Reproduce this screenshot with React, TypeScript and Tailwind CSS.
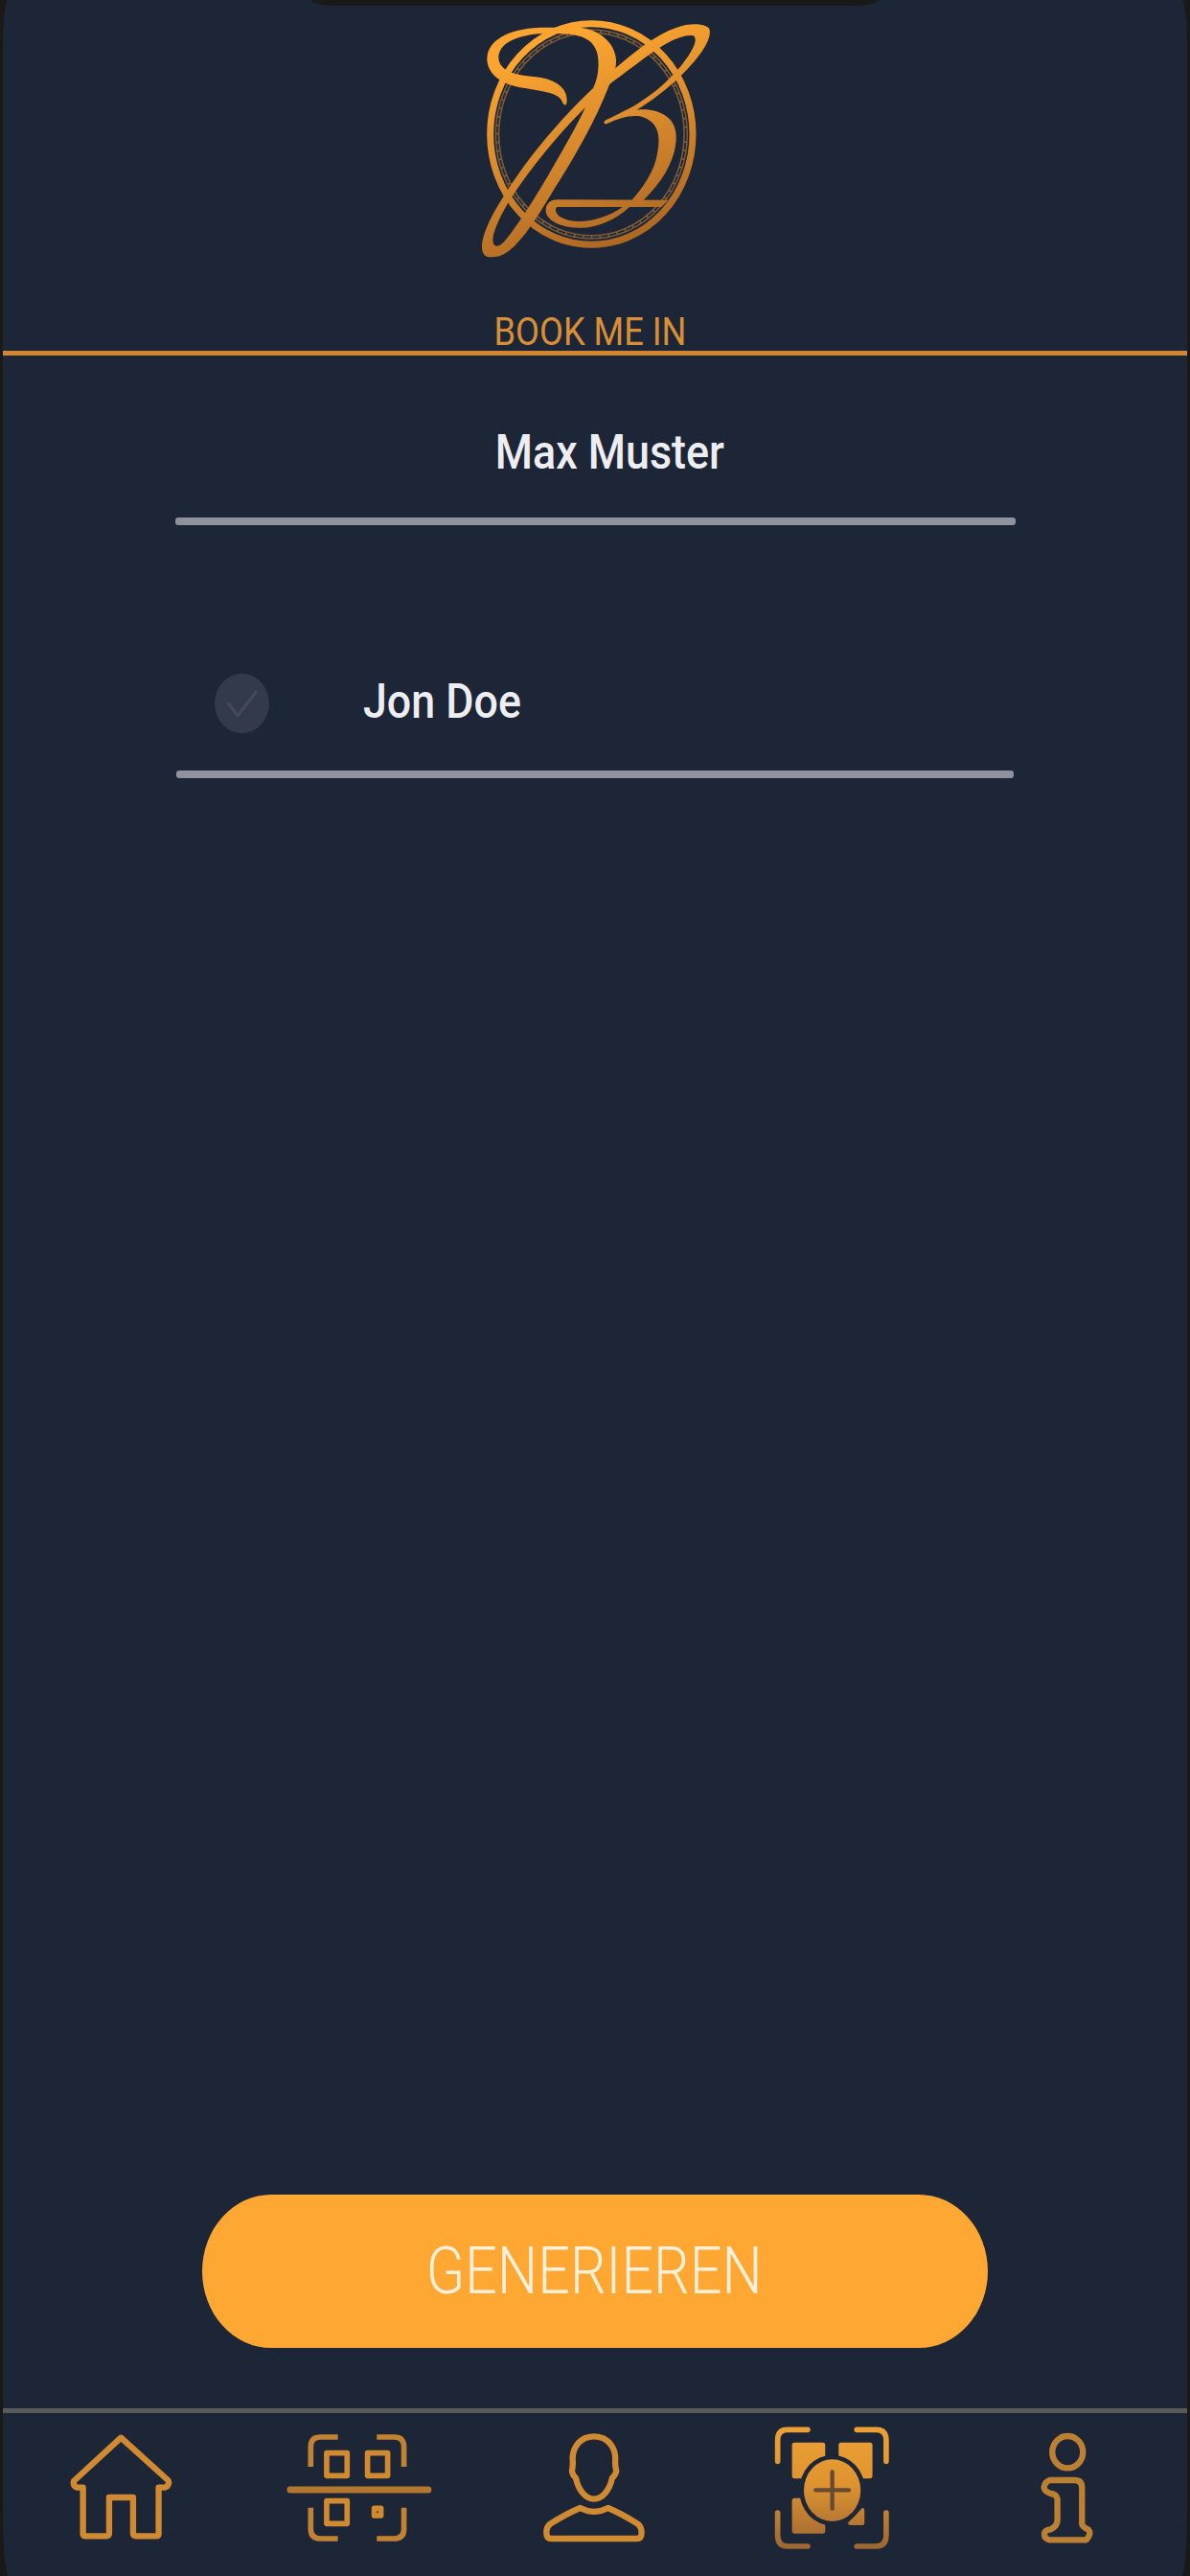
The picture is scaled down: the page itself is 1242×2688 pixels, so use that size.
import type { ReactNode } from 'react';
import clsx from 'clsx';

function Logo() {
  return (
    <svg viewBox="0 0 840 870" className="h-[290px] w-[280px]" fill="none">
      <defs>
        <linearGradient id="gold" gradientUnits="userSpaceOnUse" x1="300" y1="150" x2="520" y2="780">
          <stop offset="0" stopColor="#fba42f" />
          <stop offset="0.45" stopColor="#d98a2c" />
          <stop offset="1" stopColor="#aa6522" />
        </linearGradient>
      </defs>
      <ellipse cx="409" cy="420" rx="317" ry="346" stroke="url(#gold)" strokeWidth="21" />
      <ellipse cx="409" cy="420" rx="295" ry="322" stroke="#7d5c36" strokeWidth="14" />
      <ellipse cx="409" cy="420" rx="295" ry="322" stroke="#1d2637" strokeWidth="5" strokeDasharray="22 5" />
      <g fill="url(#gold)">
        {/* upper left flourish and stem */}
        <path d="M330 328C318 332 320 314 306 304C290 290 250 285 200 276C125 264 82 232 82 182C84 125 150 91 245 86L372 86C432 92 482 132 486 186C487 214 478 238 464 268C424 372 356 494 296 586C252 658 214 724 170 768C136 802 112 807 84 804C64 798 64 772 68 752C78 706 110 650 146 596C210 494 310 374 414 276C430 244 434 206 428 170C418 128 384 108 320 106C230 98 122 116 118 178C118 224 172 236 230 240C296 246 342 278 330 328ZM390 336C300 426 222 522 160 616C126 670 104 716 100 748C100 776 116 776 136 756C182 704 252 588 304 496C342 430 366 386 390 336Z" fillRule="evenodd" />
        {/* upper right loop */}
        <path d="M478 218C550 158 606 110 676 86C718 70 768 74 778 90C788 120 752 176 690 236C644 280 596 316 550 344C586 340 620 346 646 366C676 388 680 430 668 476C650 540 610 590 562 636L530 632C576 582 606 532 614 486C628 424 618 378 560 364C526 360 496 370 456 388C446 390 446 380 454 376C488 358 530 340 560 320C614 286 650 252 688 208C722 166 746 124 728 112C700 106 652 128 606 160C560 192 520 224 462 266Z" />
        {/* lower bowl */}
        <path d="M650 626L628 648L528 648C480 692 420 716 366 713C314 712 262 690 266 654C270 634 282 625 304 625ZM506 648L300 648C290 662 304 682 340 690C390 700 454 684 506 648Z" fillRule="evenodd" />
      </g>
    </svg>
  );
}

function NavItem({ viewBox, label, children }: { viewBox: string; label: string; children: ReactNode }) {
  return (
    <button aria-label={label} className="h-[170px] flex-1">
      <svg
        viewBox={viewBox}
        className="h-full w-full"
        fill="none"
        stroke="#d08a31"
        strokeWidth="19"
        strokeLinecap="round"
        strokeLinejoin="round"
      >
        {children}
      </svg>
    </button>
  );
}

function Navigation() {
  return (
    <nav className="flex h-[175px] border-t-[5px] border-[#5a5a58]">
      <NavItem viewBox="9 84 742 510" label="Home">
        <path d="M379 161L526 294Q532 302 524 313L516 317H497V462Q497 469 490 469H426Q417 469 417 460V348H342V460Q342 469 333 469H268Q260 469 260 462V317H242Q228 312 231 297Z" />
      </NavItem>
      <NavItem viewBox="750 84 742 510" label="Scan">
        <g strokeWidth="17" strokeLinecap="butt" stroke="#c18233">
          <path d="M973 252V190Q973 159 1004 159H1058M1180 159H1234Q1265 159 1265 190V252M973 380V446Q973 477 1004 477H1058M1180 477H1234Q1265 477 1265 446V380" />
        </g>
        <g strokeWidth="17" stroke="#d28a30">
          <path d="M1023 209H1087V280H1023ZM1151 209H1214V280H1151ZM1023 359H1087V430H1023Z" />
          <path d="M1172 382H1193V405H1172Z" />
        </g>
        <path d="M909 324H1341" strokeWidth="21" stroke="#b3762e" />
      </NavItem>
      <NavItem viewBox="-128 84 742 510" label="Profil">
        <path d="M241 157C199 157 174 190 174 228Q176 246 172 265Q174 279 184 287C192 326 215 353 241 353C267 353 290 326 298 287Q308 279 311 265Q306 246 308 228C308 190 283 157 241 157Z" />
        <path d="M198 381Q241 404 285 381C318 395 350 413 378 431Q390 440 390 458Q390 477 375 477H108Q92 477 92 458Q92 440 104 431C134 412 166 394 198 381Z" />
      </NavItem>
      <NavItem viewBox="613 84 742 510" label="Code erstellen">
        <defs>
          <linearGradient id="create" gradientUnits="userSpaceOnUse" x1="0" y1="130" x2="0" y2="510">
            <stop offset="0" stopColor="#eda035" />
            <stop offset="0.45" stopColor="#df942f" />
            <stop offset="1" stopColor="#9b6635" />
          </linearGradient>
        </defs>
        <g stroke="url(#create)" strokeWidth="17">
          <path d="M813 235V169Q813 136 843 136H907M1061 136H1122Q1153 136 1153 169V235M813 396V466Q813 501 843 501H907M1061 501H1122Q1153 501 1153 466V396" />
        </g>
        <g fill="url(#create)" stroke="none">
          <path d="M866 176H955Q962 176 962 184V250L890 289H866Q858 289 858 280V184Q858 176 866 176Z" />
          <path d="M1012 176H1102Q1110 176 1110 184V280Q1110 289 1102 289H1076L1004 250V184Q1004 176 1012 176Z" />
          <path d="M866 350H884L962 430V454Q962 461 954 461H866Q858 461 858 453V358Q858 350 866 350Z" />
          <path d="M1078 381Q1085 381 1085 389V428Q1085 435 1078 435H1042Q1033 435 1034 427Z" />
          <ellipse cx="984" cy="326" rx="103" ry="111" fill="#1d2637" />
          <ellipse cx="984" cy="326" rx="89" ry="97" />
        </g>
        <path d="M984 268V383M932 325H1036" stroke="#674a32" strokeWidth="13" />
      </NavItem>
      <NavItem viewBox="94 84 742 510" label="Info">
        <g strokeWidth="19" stroke="#bc8033">
          <ellipse cx="461" cy="206" rx="48" ry="50" />
          <path d="M405 294H482Q506 294 506 318V432Q508 440 526 449Q537 461 520 481H405Q388 478 388 462Q389 450 408 448Q428 439 429 420V352Q426 338 408 336Q387 329 387 316Q390 299 405 294Z" />
        </g>
      </NavItem>
    </nav>
  );
}

function Row({ className, children }: { className: string; children: ReactNode }) {
  return (
    <div className={clsx('mx-auto flex flex-col', className)}>
      <div className="flex flex-1 items-center">{children}</div>
      <div className="h-[8px] rounded-[3px] bg-[#8f919d]" />
    </div>
  );
}

export default function App() {
  return (
    <div className="h-[2688px] w-[1242px] overflow-hidden bg-[#191918] px-[3px] font-[Roboto,sans-serif]">
      <main className="relative flex h-full flex-col rounded-t-[5px_50px] rounded-b-[6px_70px] bg-[#1d2637]">
        <div className="absolute top-0 left-[322px] h-[6px] w-[592px] rounded-b-[26px_6px] bg-[#191a18]" />
        <header className="flex h-[371px] flex-col items-center border-b-[5px] border-[#d2862f]">
          <div className="-ml-[1px]">
            <Logo />
          </div>
          <h1 className="mt-[32px] -ml-[11px] h-[50px] scale-x-[0.905] text-[40px] leading-[50px] whitespace-nowrap text-[#d98f35]">
            BOOK ME IN
          </h1>
        </header>

        <Row className="h-[177px] w-[877px]">
          <span className="mx-auto translate-x-[15px] translate-y-[17px] scale-x-[0.897] text-[50px] font-medium whitespace-nowrap text-[#eeeef2]">
            Max Muster
          </span>
        </Row>
        <Row className="mt-[131px] h-[133px] w-[874px]">
          <svg viewBox="0 0 171 186" className="mt-[-15px] ml-[40px] h-[62px] w-[57px] shrink-0" fill="none">
            <ellipse cx="85.5" cy="93" rx="85.5" ry="93" fill="#333a49" />
            <path d="M42 91L72 132L132 54" stroke="#454a58" strokeWidth="9" />
          </svg>
          <span className="-mt-[18px] ml-[98px] origin-left scale-x-[0.895] text-[50px] font-medium whitespace-nowrap text-[#eeeef2]">
            Jon Doe
          </span>
        </Row>

        <div className="flex flex-1 flex-col items-center justify-end pb-[63px]">
          <button className="flex h-[160px] w-[820px] items-center justify-center rounded-[72px_/_80px] bg-[#fea733]">
            <span className="mr-[2px] scale-x-[0.872] text-[68px] font-light whitespace-nowrap text-[#fff0da]">
              GENERIEREN
            </span>
          </button>
        </div>
        <Navigation />
      </main>
    </div>
  );
}
